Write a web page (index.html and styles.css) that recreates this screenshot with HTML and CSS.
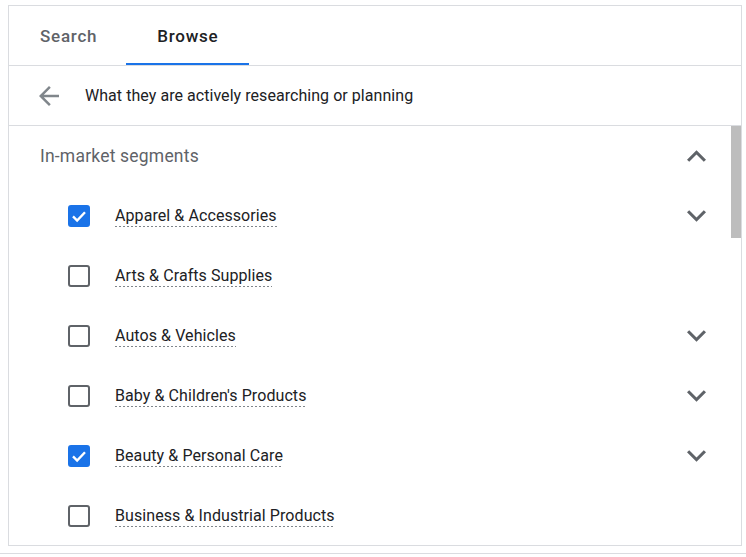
FILE: index.html
```html
<!DOCTYPE html>
<html lang="en">

<head>
    <meta charset="UTF-8">
    <meta name="viewport" content="width=device-width, initial-scale=1.0">
    <title>Audience segments</title>
    <link rel="stylesheet" href="styles.css">
</head>

<body>
    <div class="panel">
        <div class="tabs">
            <div class="tab">Search</div>
            <div class="tab active">Browse</div>
        </div>

        <div class="crumb">
            <svg class="back" width="20" height="20" viewBox="4 4 16 16">
                <path d="M20 11H7.83l5.59-5.59L12 4l-8 8 8 8 1.41-1.41L7.83 13H20v-2z" />
            </svg>
            <span>What they are actively researching or planning</span>
        </div>

        <div class="list">
            <div class="group-head">
                <span>In-market segments</span>
                <svg class="chevron" width="19" height="12" viewBox="6 8 12 7.41">
                    <path d="M12 8l-6 6 1.41 1.41L12 10.83l4.59 4.58L18 14z" />
                </svg>
            </div>

            <div class="row">
                <span class="box checked">
                    <svg width="20" height="20" viewBox="0 0 24 24"><polyline points="4,12.5 9.5,18 20,7" /></svg>
                </span>
                <span class="label">Apparel &amp; Accessories</span>
                <svg class="chevron" width="19" height="12" viewBox="6 8.59 12 7.41">
                    <path d="M16.59 8.59L12 13.17 7.41 8.59 6 10l6 6 6-6z" />
                </svg>
            </div>

            <div class="row">
                <span class="box"></span>
                <span class="label">Arts &amp; Crafts Supplies</span>
            </div>

            <div class="row">
                <span class="box"></span>
                <span class="label">Autos &amp; Vehicles</span>
                <svg class="chevron" width="19" height="12" viewBox="6 8.59 12 7.41">
                    <path d="M16.59 8.59L12 13.17 7.41 8.59 6 10l6 6 6-6z" />
                </svg>
            </div>

            <div class="row">
                <span class="box"></span>
                <span class="label">Baby &amp; Children's Products</span>
                <svg class="chevron" width="19" height="12" viewBox="6 8.59 12 7.41">
                    <path d="M16.59 8.59L12 13.17 7.41 8.59 6 10l6 6 6-6z" />
                </svg>
            </div>

            <div class="row">
                <span class="box checked">
                    <svg width="20" height="20" viewBox="0 0 24 24"><polyline points="4,12.5 9.5,18 20,7" /></svg>
                </span>
                <span class="label">Beauty &amp; Personal Care</span>
                <svg class="chevron" width="19" height="12" viewBox="6 8.59 12 7.41">
                    <path d="M16.59 8.59L12 13.17 7.41 8.59 6 10l6 6 6-6z" />
                </svg>
            </div>

            <div class="row">
                <span class="box"></span>
                <span class="label">Business &amp; Industrial Products</span>
            </div>

            <div class="scroll-thumb"></div>
        </div>
    </div>
    <div class="footer-line"></div>
</body>

</html>
```

FILE: styles.css
```css
body {
    margin: 0;
    font-family: Roboto, "Liberation Sans", Arial, sans-serif;
    color: #202124;
    background: #fff;
}

.panel {
    width: 734px;
    margin: 5px 0 0 8px;
    border: 1px solid #dadce0;
    box-sizing: border-box;
}

/* tabs */
.tabs {
    display: flex;
    height: 60px;
    border-bottom: 1px solid #dadce0;
    box-sizing: border-box;
}

.tab {
    display: flex;
    align-items: center;
    padding: 2px 29px 0 31px;
    font-size: 17px;
    font-weight: 500;
    color: #5f6368;
    letter-spacing: 0.75px;
    border-bottom: 2px solid transparent;
}

.tab.active {
    padding-right: 31px;
    color: #202124;
    border-bottom-color: #1a73e8;
}

/* breadcrumb */
.crumb {
    display: flex;
    align-items: center;
    gap: 26px;
    height: 60px;
    padding-left: 30px;
    border-bottom: 1px solid #dadce0;
    box-sizing: border-box;
    font-size: 16px;
    letter-spacing: 0.05px;
}

.back {
    fill: #80868b;
}

/* list */
.list {
    position: relative;
    height: 419px;
    overflow: hidden;
}

.group-head,
.row {
    display: flex;
    align-items: center;
    height: 60px;
    padding-right: 35px;
}

.group-head {
    padding-left: 31px;
    font-size: 17.5px;
    letter-spacing: 0.2px;
    color: #5f6368;
}

.group-head span {
    flex: 1;
}

.row {
    padding-left: 59px;
    font-size: 16px;
    letter-spacing: 0.08px;
}

.chevron {
    fill: #5f6368;
    margin-left: auto;
}

.box {
    display: flex;
    align-items: center;
    justify-content: center;
    width: 22px;
    height: 22px;
    border: 2.5px solid #5f6368;
    border-radius: 3px;
    box-sizing: border-box;
    margin-right: 25px;
    flex-shrink: 0;
}

.box.checked {
    background: #1a73e8;
    border-color: #1a73e8;
}

.box svg polyline {
    fill: none;
    stroke: #fff;
    stroke-width: 3.2;
}

.label {
    padding-bottom: 2px;
    background: linear-gradient(to right, #80868b 50%, transparent 0) repeat-x left bottom / 4px 1px;
    margin-top: 1px;
}

.scroll-thumb {
    position: absolute;
    top: 0;
    right: 0;
    width: 10px;
    height: 112px;
    background: #bdbdbd;
}

.footer-line {
    margin-top: 7px;
    border-top: 1px solid #dadce0;
}
```
